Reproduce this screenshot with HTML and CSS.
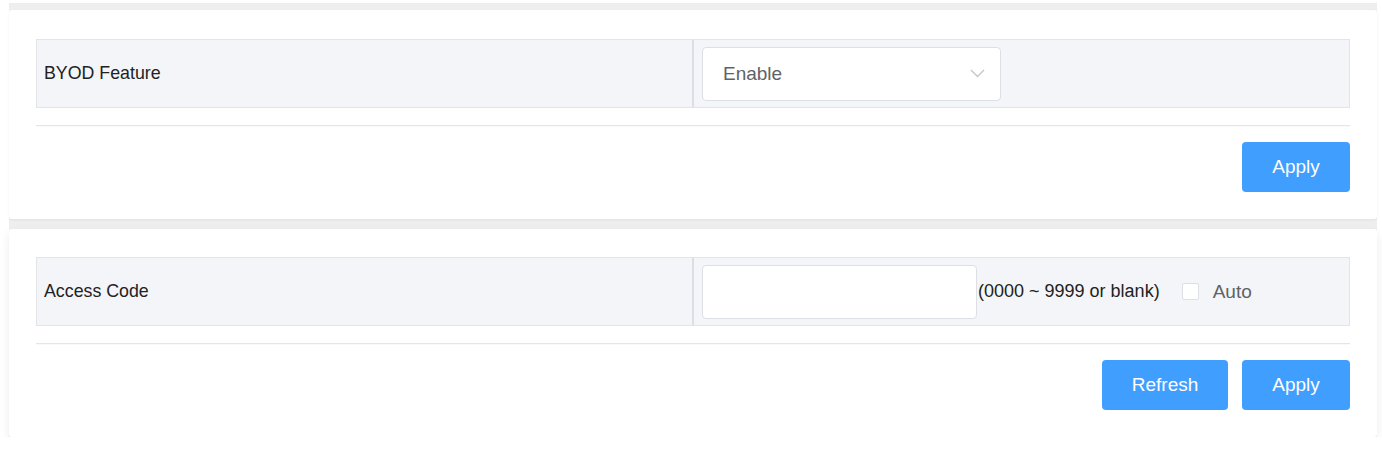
FILE: index.html
```html
<!DOCTYPE html>
<html lang="en">
<head>
<meta charset="utf-8">
<title>BYOD</title>
<link rel="stylesheet" href="styles.css">
</head>
<body>
<div class="stack">
  <section class="card">
    <div class="row">
      <div class="label">BYOD Feature</div>
      <div class="value">
        <div class="select">
          <span class="select-text">Enable</span>
          <svg class="chev" width="15" height="9" viewBox="0 0 15 9"><path d="M1 1 L7.5 7.5 L14 1" fill="none" stroke="#c0c4cc" stroke-width="1.3"/></svg>
        </div>
      </div>
    </div>
    <div class="divider"></div>
    <div class="actions">
      <button class="btn btn-apply">Apply</button>
    </div>
  </section>
  <section class="card">
    <div class="row">
      <div class="label">Access Code</div>
      <div class="value">
        <input class="input" type="text" value="">
        <span class="hint">(0000 ~ 9999 or blank)</span>
        <label class="check"><span class="box"></span><span class="check-text">Auto</span></label>
      </div>
    </div>
    <div class="divider"></div>
    <div class="actions">
      <button class="btn btn-refresh">Refresh</button>
      <button class="btn btn-apply">Apply</button>
    </div>
  </section>
</div>
</body>
</html>
```
FILE: styles.css
```css
html, body {
  margin: 0;
  padding: 0;
  background: #ffffff;
  font-family: "Liberation Sans", Arial, sans-serif;
}
.stack {
  margin: 3px 5px 0 9px;
  background: #eeeeee;
  padding: 7px 0 0;
  display: flex;
  flex-direction: column;
  gap: 10px;
}
.card {
  background: #ffffff;
  border-radius: 3px;
  padding: 29px 27px 27px;
  box-shadow: 0 1px 3px rgba(0,0,0,0.06);
}
.card + .card {
  padding-top: 28px;
  box-shadow: 0 4px 10px rgba(0,0,0,0.08);
}
.row {
  display: flex;
  height: 69px;
  box-sizing: border-box;
  border: 1px solid #e2e4e8;
  background: #f4f5f9;
}
.label {
  width: 657px;
  flex: none;
  box-sizing: border-box;
  border-right: 2px solid #dcdee3;
  padding-left: 7px;
  display: flex;
  align-items: center;
  font-size: 17.8px;
  color: #222;
}
.value {
  flex: 1;
  display: flex;
  align-items: center;
  padding-left: 8px;
}
.select {
  width: 299px;
  height: 54px;
  box-sizing: border-box;
  border: 1px solid #dcdfe6;
  border-radius: 4px;
  background: #fff;
  display: flex;
  align-items: center;
  justify-content: space-between;
  padding: 0 15px 0 20px;
}
.select-text {
  font-size: 19px;
  color: #606266;
}
.chev {
  display: block;
}
.input {
  width: 275px;
  height: 54px;
  box-sizing: border-box;
  border: 1px solid #dcdfe6;
  border-radius: 4px;
  background: #fff;
  margin: 0;
  padding: 0 10px;
  font-size: 19px;
  font-family: inherit;
  outline: none;
}
.hint {
  font-size: 18px;
  color: #222;
  margin-left: 1px;
}
.check {
  display: flex;
  align-items: center;
  margin-left: 22px;
}
.box {
  width: 15px;
  height: 15px;
  border: 1px solid #dcdfe6;
  border-radius: 2px;
  background: #fff;
}
.check-text {
  margin-left: 14px;
  font-size: 19px;
  color: #606266;
}
.divider {
  height: 1px;
  background: #e6e6e6;
  margin: 17px 0 16px;
  box-shadow: 0 1px 1px rgba(0,0,0,0.03);
}
.actions {
  display: flex;
  justify-content: flex-end;
  gap: 14px;
}
.btn {
  height: 50px;
  border: none;
  border-radius: 4px;
  background: #409eff;
  color: #fff;
  font-family: inherit;
  font-size: 19px;
  padding: 0;
  cursor: pointer;
}
.btn-apply {
  width: 108px;
}
.btn-refresh {
  width: 126px;
}
```
